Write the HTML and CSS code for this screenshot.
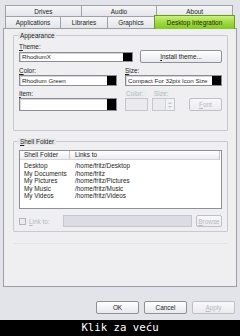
FILE: index.html
```html
<!DOCTYPE html>
<html lang="hr">
<head>
    <meta charset="UTF-8">
    <title>Desktop Integration</title>
    <link rel="stylesheet" href="styles.css">
</head>
<body>

    <div class="dialog">
        <div class="tabs">
            <div class="tab-row back">
                <div class="tab">Drives</div>
                <div class="tab">Audio</div>
                <div class="tab">About</div>
            </div>
            <div class="tab-row front">
                <div class="tab tab-apps">Applications</div>
                <div class="tab tab-libs">Libraries</div>
                <div class="tab tab-gfx">Graphics</div>
                <div class="tab tab-desk active">Desktop Integration</div>
            </div>
        </div>

        <div class="page">
            <fieldset class="group appearance">
                <legend>Appearance</legend>

                <div class="label first"><u>T</u>heme:</div>
                <div class="theme-row">
                    <div class="field theme-field">RhodiumX<span class="swatch"></span></div>
                    <div class="btn install"><u>I</u>nstall theme...</div>
                </div>

                <div class="grid-row labels">
                    <div class="label"><u>C</u>olor:</div>
                    <div class="label"><u>S</u>ize:</div>
                </div>
                <div class="grid-row fields">
                    <div class="field">Rhodium Green<span class="swatch"></span></div>
                    <div class="field">Compact For 32pix Icon Size<span class="swatch"></span></div>
                </div>

                <div class="grid-row labels">
                    <div class="label"><u>I</u>tem:</div>
                    <div class="sub-labels">
                        <span class="label off color-off">Color:</span>
                        <span class="label off">Size:</span>
                    </div>
                </div>
                <div class="grid-row fields tall">
                    <div class="field"><span class="swatch"></span></div>
                    <div class="item-tools">
                        <div class="box-off"></div>
                        <div class="spin-off">
                            <span class="spin-arrows">
                                <span class="arrow up"></span>
                                <span class="arrow down"></span>
                            </span>
                        </div>
                        <div class="btn off font-btn"><u>F</u>ont</div>
                    </div>
                </div>
            </fieldset>

            <fieldset class="group shell">
                <legend><u>S</u>hell Folder</legend>

                <div class="list">
                    <div class="list-head">
                        <span class="col-name">Shell Folder</span>
                        <span class="col-link">Links to</span>
                    </div>
                    <div class="list-row"><span class="col-name">Desktop</span><span class="col-link">/home/fritz/Desktop</span></div>
                    <div class="list-row"><span class="col-name">My Documents</span><span class="col-link">/home/fritz</span></div>
                    <div class="list-row"><span class="col-name">My Pictures</span><span class="col-link">/home/fritz/Pictures</span></div>
                    <div class="list-row"><span class="col-name">My Music</span><span class="col-link">/home/fritz/Music</span></div>
                    <div class="list-row"><span class="col-name">My Videos</span><span class="col-link">/home/fritz/Videos</span></div>
                </div>

                <div class="link-row">
                    <span class="check"></span>
                    <span class="link-label"><u>L</u>ink to:</span>
                    <div class="link-field"></div>
                    <div class="btn off browse"><u>B</u>rowse</div>
                </div>
            </fieldset>

            <div class="page-rule"></div>
        </div>

        <div class="buttons">
            <div class="btn">OK</div>
            <div class="btn">Cancel</div>
            <div class="btn off"><u>A</u>pply</div>
        </div>
    </div>

    <div class="caption">Klik za veću</div>

</body>
</html>
```

FILE: styles.css
```css
body {
    margin: 0;
    width: 240px;
    height: 336px;
    overflow: hidden;
    background-color: #000;
    font-family: "Liberation Sans", Arial, sans-serif;
    font-size: 6.4px;
    color: #1e1e22;
}

u {
    text-decoration-thickness: 0.5px;
    text-underline-offset: 1px;
}

.dialog {
    height: 320px;
    box-sizing: border-box;
    padding: 5px 3px 0 3px;
    background-color: #e3e4ea;
    display: flex;
    flex-direction: column;
}

/* tabs */
.tabs {
    margin-left: 2px;
}

.tab-row {
    display: flex;
}

.tab-row.back {
    height: 11px;
    margin-right: 4px;
}

.tab-row.front {
    height: 12px;
}

.tab {
    flex: 1;
    box-sizing: border-box;
    border: 1px solid #9fa0a8;
    border-bottom: none;
    margin-left: -1px;
    background: linear-gradient(#f6f6f8, #e4e5ea);
    display: flex;
    align-items: center;
    justify-content: center;
    white-space: nowrap;
}

.tab-row.back .tab:first-child,
.tab-row.front .tab:first-child {
    margin-left: 0;
}

.tab-apps { flex: 0 0 56px; }
.tab-libs { flex: 0 0 48px; }
.tab-gfx  { flex: 0 0 48px; }

.tab.active {
    flex: 0 0 81px;
    height: 14px;
    margin-top: -1px;
    position: relative;
    z-index: 2;
    border-color: #6b9a22;
    background: linear-gradient(#c9f080, #9ad83c 55%, #84c823);
    color: #1b2a08;
}

/* page */
.page {
    height: 259px;
    box-sizing: border-box;
    border: 1px solid #9d9ea6;
    background-color: #efeff2;
    padding: 3px 8px 0 9px;
}

.group {
    margin: 0;
    border: 1px solid #c9cad1;
    border-radius: 1px;
    padding: 0 5px 0 5px;
    min-width: 0;
}

.group legend {
    padding: 0 2px;
    margin-left: -1px;
    height: 7px;
    line-height: 7px;
    background-color: #e6e7eb;
}

.appearance {
    padding-bottom: 19px;
}

.shell {
    margin-top: 7px;
    padding-bottom: 4px;
}

.label {
    height: 7px;
    line-height: 7px;
    white-space: nowrap;
}

.label.first {
    margin-top: 4px;
}

.label.off {
    color: #b4b8bd;
    background-color: #e8eded;
    padding: 0 1px;
}

.theme-row {
    display: flex;
    align-items: center;
    height: 13px;
}

.grid-row {
    display: grid;
    grid-template-columns: 98px 97px;
    column-gap: 8px;
}

.grid-row.labels {
    margin-top: 4px;
}

.grid-row.fields {
    margin-top: 1px;
    height: 11px;
}

.grid-row.fields.tall {
    height: 13px;
}

.sub-labels {
    display: flex;
    gap: 6px;
}

.color-off {
    width: 20px;
}

.field {
    box-sizing: border-box;
    border: 1px solid #8b8c94;
    box-shadow: inset 1px 1px 0 #d4d4da;
    background-color: #fff;
    display: flex;
    align-items: center;
    padding-left: 2px;
    font-size: 6.2px;
    white-space: nowrap;
    overflow: hidden;
}

.theme-field {
    width: 114px;
    height: 10px;
}

.swatch {
    margin-left: auto;
    align-self: stretch;
    width: 9px;
    flex-shrink: 0;
    background-color: #000;
}

.btn {
    box-sizing: border-box;
    border: 1px solid #8f9098;
    border-radius: 2px;
    background: linear-gradient(#fefefe, #e8e9ee);
    display: flex;
    align-items: center;
    justify-content: center;
    white-space: nowrap;
}

.btn.off {
    color: #b6b9be;
    border-color: #bfc0c7;
    background: linear-gradient(#f8f8fa, #ececf0);
}

.install {
    width: 82px;
    height: 13px;
    margin-left: 7px;
}

.item-tools {
    display: flex;
    height: 13px;
}

.box-off,
.spin-off {
    box-sizing: border-box;
    border: 1px solid #c6c7ce;
    background-color: #ebebef;
}

.box-off {
    width: 23px;
}

.spin-off {
    width: 23px;
    margin-left: 4px;
    display: flex;
    justify-content: flex-end;
}

.spin-arrows {
    width: 8px;
    border-left: 1px solid #d2d3d9;
    background-color: #f2f2f5;
    display: flex;
    flex-direction: column;
    align-items: center;
    justify-content: center;
    gap: 2px;
}

.arrow {
    width: 0;
    height: 0;
    border-left: 2px solid transparent;
    border-right: 2px solid transparent;
}

.arrow.up {
    border-bottom: 2px solid #c0c2c8;
}

.arrow.down {
    border-top: 2px solid #c0c2c8;
}

.font-btn {
    width: 33px;
    margin-left: 14px;
}

/* shell folder list */
.list {
    margin-top: 5px;
    height: 59px;
    box-sizing: border-box;
    border: 1px solid #8e8f97;
    background-color: #fff;
}

.list-head {
    display: flex;
    height: 8px;
    line-height: 8px;
    margin-right: 1px;
    border-right: 1px solid #c6c7cd;
    border-bottom: 1px solid #d4d5da;
    background: linear-gradient(#ffffff, #ececf0);
}

.list-head .col-name {
    border-right: 1px solid #c6c7cd;
}

.list-row {
    display: flex;
    height: 7.6px;
    line-height: 7.6px;
}

.col-name {
    width: 50px;
    box-sizing: border-box;
    padding-left: 4px;
    white-space: nowrap;
}

.col-link {
    padding-left: 5px;
    white-space: nowrap;
}

.list-head + .list-row {
    margin-top: 2px;
}

.link-row {
    margin-top: 6px;
    height: 12px;
    display: flex;
    align-items: center;
}

.check {
    width: 7px;
    height: 7px;
    box-sizing: border-box;
    border: 1px solid #b2b4ba;
    background-color: #ececef;
}

.link-label {
    margin-left: 3px;
    width: 34px;
    color: #b4b8bd;
}

.link-field {
    width: 129px;
    height: 12px;
    box-sizing: border-box;
    border: 1px solid #c6c7ce;
    background-color: #dcdde4;
}

.browse {
    width: 26px;
    height: 12px;
    margin-left: 4px;
}

.page-rule {
    margin-top: 11px;
    border-top: 1px solid #e2e3e7;
}

/* bottom buttons */
.buttons {
    display: flex;
    justify-content: flex-end;
    gap: 5px;
    padding-top: 14px;
    margin-right: 2px;
}

.buttons .btn {
    width: 43px;
    height: 13px;
}

.caption {
    height: 16px;
    line-height: 16px;
    text-align: center;
    color: #fff;
    font-family: "DejaVu Sans Mono", monospace;
    font-size: 10.7px;
}
```
